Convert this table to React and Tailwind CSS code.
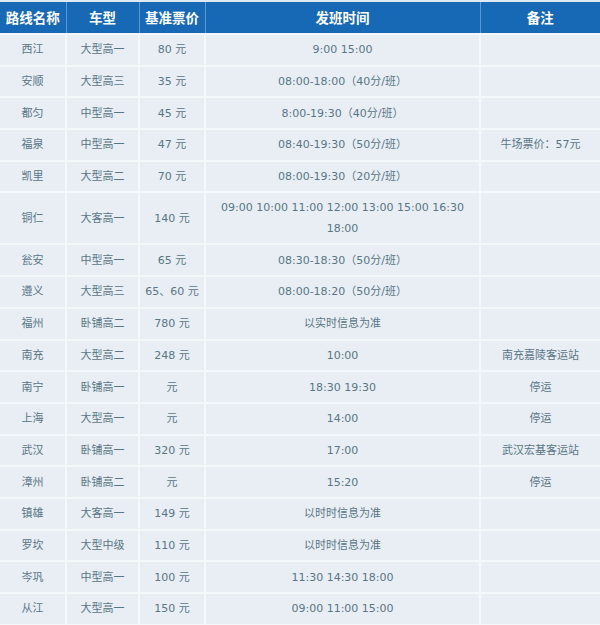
const rows = [
  { name: "西江", type: "大型高一", price: "80 元", time: "9:00 15:00", note: "" },
  { name: "安顺", type: "大型高三", price: "35 元", time: "08:00-18:00（40分/班）", note: "" },
  { name: "都匀", type: "中型高一", price: "45 元", time: "8:00-19:30（40分/班）", note: "" },
  { name: "福泉", type: "中型高一", price: "47 元", time: "08:40-19:30（50分/班）", note: "牛场票价：57元" },
  { name: "凯里", type: "大型高二", price: "70 元", time: "08:00-19:30（20分/班）", note: "" },
  { name: "铜仁", type: "大客高一", price: "140 元", time: "09:00 10:00 11:00 12:00 13:00 15:00 16:30 18:00", note: "", tall: true },
  { name: "瓮安", type: "中型高一", price: "65 元", time: "08:30-18:30（50分/班）", note: "" },
  { name: "遵义", type: "大型高三", price: "65、60 元", time: "08:00-18:20（50分/班）", note: "" },
  { name: "福州", type: "卧铺高二", price: "780 元", time: "以实时信息为准", note: "" },
  { name: "南充", type: "大型高二", price: "248 元", time: "10:00", note: "南充嘉陵客运站" },
  { name: "南宁", type: "卧铺高一", price: "元", time: "18:30 19:30", note: "停运" },
  { name: "上海", type: "大型高一", price: "元", time: "14:00", note: "停运" },
  { name: "武汉", type: "卧铺高一", price: "320 元", time: "17:00", note: "武汉宏基客运站" },
  { name: "漳州", type: "卧铺高二", price: "元", time: "15:20", note: "停运" },
  { name: "镇雄", type: "大客高一", price: "149 元", time: "以时时信息为准", note: "" },
  { name: "罗坎", type: "大型中级", price: "110 元", time: "以时时信息为准", note: "" },
  { name: "岑巩", type: "中型高一", price: "100 元", time: "11:30 14:30 18:00", note: "" },
  { name: "从江", type: "大型高一", price: "150 元", time: "09:00 11:00 15:00", note: "" },
];

const heads = ["路线名称", "车型", "基准票价", "发班时间", "备注"];

export default function App() {
  return (
    <div className="w-[600px] h-[625px] overflow-hidden bg-[#f4f7fa] font-['DejaVu_Sans','Noto_Sans_CJK_SC',sans-serif]">
      <table className="w-[600px] table-fixed border-collapse">
        <colgroup>
          <col className="w-[66px]" />
          <col className="w-[73px]" />
          <col className="w-[66px]" />
          <col className="w-[275px]" />
          <col className="w-[120px]" />
        </colgroup>
        <thead>
          <tr className="h-[33px] bg-[#1769b6]">
            {heads.map((h) => (
              <th
                key={h}
                className="border-x border-t-2 border-t-[#dfe9f2] border-x-[#5b9ad0] border-b-2 border-b-[#f4f7fa] text-center text-[13.5px] font-bold text-white font-['Noto_Sans_CJK_SC',sans-serif] first:border-l-0 last:border-r-0"
              >
                {h}
              </th>
            ))}
          </tr>
        </thead>
        <tbody>
          {rows.map((r) => (
            <tr key={r.name} className={r.tall ? "h-[52px]" : "h-[31.7px]"}>
              {[r.name, r.type, r.price, r.time, r.note].map((c, i) => (
                <td
                  key={i}
                  className={
                    "border-2 border-[#f5f8fb] bg-[#e8eef4] text-center align-middle text-[11px] leading-[21px] text-[#587686] first:border-l-0 last:border-r-0 " +
                    (i === 3 ? "px-3" : "px-1")
                  }
                >
                  {c}
                </td>
              ))}
            </tr>
          ))}
        </tbody>
      </table>
    </div>
  );
}
